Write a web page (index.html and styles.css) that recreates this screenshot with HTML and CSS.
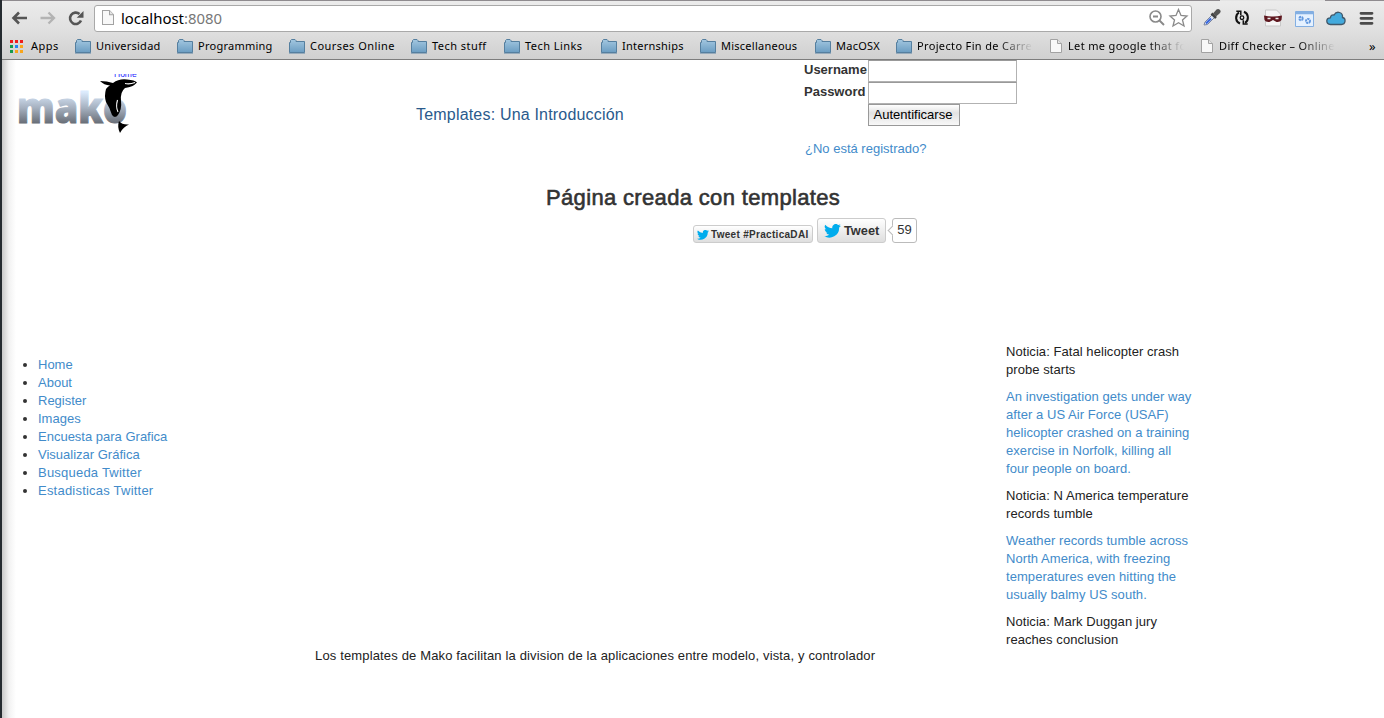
FILE: index.html
```html
<!DOCTYPE html>
<html lang="es">
<head>
<meta charset="utf-8">
<title>Templates</title>
<link rel="stylesheet" href="styles.css">
</head>
<body>
<svg class="defs" width="0" height="0" aria-hidden="true">
  <defs>
    <linearGradient id="gFolder" x1="0" y1="0" x2="0" y2="1"><stop offset="0" stop-color="#a3c7e0"/><stop offset="1" stop-color="#6b9dc2"/></linearGradient>
    <linearGradient id="gMako" gradientUnits="userSpaceOnUse" x1="0" y1="18" x2="0" y2="50"><stop offset="0" stop-color="#dcebfd"/><stop offset=".5" stop-color="#a5b0bf"/><stop offset="1" stop-color="#666b74"/></linearGradient>
    <symbol id="folder" viewBox="0 0 16 15"><path d="M.5 13.500V3.500H1.500V1.500L2.500.5H6L7 1.500V2.500H15.500V13.500Z" fill="url(#gFolder)" stroke="#557f9f"/><path d="M0 14.300H16" stroke="#557f9f" stroke-width=".6"/></symbol>
    <symbol id="file" viewBox="0 0 12 14"><path d="M.5.5H7.500L11.500 4.500V13.500H.5Z" fill="#f8f8f8" stroke="#a2a2a2"/><path d="M7.500.5V4.500H11.500" fill="#e4e4e4" stroke="#a2a2a2"/></symbol>
    <symbol id="bird" viewBox="0 0 24 20"><path d="M24 2.400a10 10 0 0 1-2.800.8A5 5 0 0 0 23.300.4a10 10 0 0 1-3.100 1.200A4.900 4.900 0 0 0 11.800 6.100 14 14 0 0 1 1.700 1a4.900 4.900 0 0 0 1.500 6.600A5 5 0 0 1 1 7a4.900 4.900 0 0 0 3.900 4.800 5 5 0 0 1-2.200.1 4.900 4.900 0 0 0 4.600 3.400A9.900 9.900 0 0 1 0 17.300 14 14 0 0 0 21.500 4.900 10 10 0 0 0 24 2.400Z" fill="#00aced"/></symbol>
  </defs>
</svg>

<div class="chrome">
  <div class="toolbar">
    <svg class="nav-icons" width="78" height="18" viewBox="0 0 78 18" fill="none">
      <path d="M9 3.500 3.500 9 9 14.500M4 9H17" stroke="#555" stroke-width="2.600"/>
      <path d="M38.500 3.500 44 9 38.500 14.500M43.500 9H30.500" stroke="#b3b3b3" stroke-width="2.300"/>
      <path d="M71 11.500A5.700 5.700 0 1 1 69.500 5" stroke="#555" stroke-width="2.600"/><path d="M73.500 2V8.800H66.700Z" fill="#555"/>
    </svg>
    <div class="omnibox">
      <svg class="page-icon" width="12" height="15" viewBox="0 0 12 14" preserveAspectRatio="none"><use href="#file"/></svg>
      <span class="host">localhost</span><span class="port">:8080</span>
      <svg class="omni-icons" width="42" height="20" viewBox="0 0 42 20" fill="none" stroke="#8a8a8a">
        <circle cx="7.500" cy="8.500" r="5.500" stroke-width="1.600"/><path d="M5 8.500H10M11.500 12.500 16 17" stroke-width="1.900"/>
        <path d="M30.500 1.500 33 7.500 39 8 34.500 12 36 18 30.500 14.800 25 18 26.500 12 22 8 28 7.500Z" stroke-width="1.300" fill="#fff"/>
      </svg>
    </div>
    <svg class="ext-icons" width="176" height="22" viewBox="0 0 176 22">
      <g><path d="M2 18 3 15 11 7 13.500 9.500 5.500 17.500Z" fill="#dce5f5" stroke="#7b86a0"/><path d="M4 16.500 9 11.500" stroke="#3967dc" stroke-width="2.200"/><path d="M9.500 6.500 14 11" stroke="#444" stroke-width="2.500"/><path d="M11 6.500 14.500 2.500Q16.500 1.500 18 3T17.500 6.500L14 9.500Z" fill="#555"/></g>
      <g fill="none" stroke="#111" stroke-width="2"><path d="M38 16.500A6.200 6.200 0 0 1 37 5.500M42 4.800A6.200 6.200 0 0 1 43 15.800"/><circle cx="40" cy="10.700" r="1.800" stroke-width="1.300"/><path d="M34.300 4.300H38.800V8.200M45.700 17H41.300V13.200" stroke-width="1.500"/></g>
      <path d="M63.500 3H74.500L78.500 7V19H63.500Z" fill="#f5f5f5" stroke="#c8c8c8"/><path d="M62 8.500Q71 10.500 80 8.500L79.500 13Q78 15.500 74.500 15L71 13 67.500 15Q63.500 15.500 62.500 13Z" fill="#5f1820"/><path d="M65.500 11.500H68.500M73.500 11.500H76.500" stroke="#eee" stroke-width="1.500"/>
      <path d="M93.500 4.500H111.500V19.500H93.500Z" fill="#e5f1ff" stroke="#83afe2"/><path d="M94 6H111" stroke="#83afe2" stroke-width="2.500"/><g fill="none" stroke="#6298df" stroke-width="2" stroke-dasharray="2 .6"><circle cx="99" cy="11.500" r="1.700"/><circle cx="106" cy="14" r="2"/></g>
      <path d="M128.500 17.500Q124.500 17 124.800 13.500 125.200 10.800 128.300 10.800 129 7.500 132 8 134 4.500 137.500 5.500 141 6.500 140.500 10.500 143.500 11.200 143 14.500 142.500 17.500 139.500 17.500Z" fill="#43aadd" stroke="#41586a" stroke-width="1.300"/>
      <path d="M159 6.300H170M159 11.300H170M159 16.300H170" stroke="#4a4a4a" stroke-width="2.800" stroke-linecap="round"/>
    </svg>
  </div>
  <div class="bookmarks">
    <div class="bm"><svg class="apps" width="13" height="13" viewBox="0 0 13 13"><path d="M0 0h3v3H0zM5 0h3v3H5zM10 0h3v3h-3z" fill="#ee1c1c"/><path d="M0 5h3v3H0zM0 10h3v3H0z" fill="#159a4b"/><path d="M5 5h3v3H5z" fill="#2383f3"/><path d="M10 5h3v3h-3zM5 10h3v3H5zM10 10h3v3h-3z" fill="#f8a51b"/></svg><span>Apps</span></div>
    <div class="bm tight"><svg class="folder"><use href="#folder"/></svg><span>Universidad</span></div>
    <div class="bm tight"><svg class="folder"><use href="#folder"/></svg><span>Programming</span></div>
    <div class="bm"><svg class="folder"><use href="#folder"/></svg><span>Courses Online</span></div>
    <div class="bm"><svg class="folder"><use href="#folder"/></svg><span>Tech stuff</span></div>
    <div class="bm"><svg class="folder"><use href="#folder"/></svg><span>Tech Links</span></div>
    <div class="bm tight"><svg class="folder"><use href="#folder"/></svg><span>Internships</span></div>
    <div class="bm tight"><svg class="folder"><use href="#folder"/></svg><span>Miscellaneous</span></div>
    <div class="bm tight"><svg class="folder"><use href="#folder"/></svg><span>MacOSX</span></div>
    <div class="bm"><svg class="folder"><use href="#folder"/></svg><span class="fade">Projecto Fin de Carre</span></div>
    <div class="bm"><svg class="file"><use href="#file"/></svg><span class="fade">Let me google that fo</span></div>
    <div class="bm"><svg class="file"><use href="#file"/></svg><span class="fade">Diff Checker – Online</span></div>
    <div class="bm more">»</div>
  </div>
</div>

<div class="page">
  <header class="head">
    <div class="logo">
      <svg width="122" height="64" viewBox="0 0 122 64">
        <text class="logo-home" x="96" y="3">Home</text>
        <text class="logo-text" x="-1" y="49" textLength="110" lengthAdjust="spacingAndGlyphs" fill="url(#gMako)" stroke="url(#gMako)">mako</text>
        <path d="M82 7Q89 7 95 9Q101 4.500 109 5.500Q117 6 119 8.500Q115 13 107 14Q102 18 103 27Q104 35 100 41Q97 45 94 41Q92 34 88 28Q86 22 88 15Q90 12 92 11.500Q86 11 82 7Z" fill="#000"/>
        <path d="M107 9.500Q112 10.500 117 8.500M99.500 26Q97.500 33 100 38" stroke="#fff" fill="none" stroke-width="1.100"/>
        <path d="M101 47Q104 51 111 50.500Q105 53 102 59Q99 53 101 47Z" fill="#000"/>
      </svg>
    </div>
    <div class="title">Templates: Una Introducción</div>
    <div class="login">
      <div class="field"><label>Username</label><input type="text"></div>
      <div class="field"><label>Password</label><input type="password"></div>
      <button class="submit">Autentificarse</button>
      <a class="signup">¿No está registrado?</a>
    </div>
  </header>
  <h3 class="heading">Página creada con templates</h3>
  <div class="tweets">
    <div class="tw small"><svg width="12" height="10"><use href="#bird"/></svg><span>Tweet #PracticaDAI</span></div>
    <div class="tw big"><svg width="17" height="14"><use href="#bird"/></svg><span>Tweet</span></div>
    <div class="count">59</div>
  </div>
  <main class="main">
    <ul class="menu">
      <li><a>Home</a></li><li><a>About</a></li><li><a>Register</a></li><li><a>Images</a></li><li><a>Encuesta para Grafica</a></li><li><a>Visualizar Gráfica</a></li><li class="wide"><a>Busqueda Twitter</a></li><li class="wide"><a>Estadisticas Twitter</a></li>
    </ul>
    <p class="center">Los templates de Mako facilitan la division de la aplicaciones entre modelo, vista, y controlador</p>
    <div class="news">
      <p>Noticia: Fatal helicopter crash<br>probe starts</p>
      <p><a>An investigation gets under way<br>after a US Air Force (USAF)<br>helicopter crashed on a training<br>exercise in Norfolk, killing all<br>four people on board.</a></p>
      <p>Noticia: N America temperature<br>records tumble</p>
      <p><a>Weather records tumble across<br>North America, with freezing<br>temperatures even hitting the<br>usually balmy US south.</a></p>
      <p>Noticia: Mark Duggan jury<br>reaches conclusion</p>
    </div>
  </main>
</div>
</body>
</html>
```
FILE: styles.css
```css
* { box-sizing: border-box; }
body {
  margin: 0;
  height: 718px;
  overflow: hidden;
  background: #fff;
  border-left: 2px solid #252b30;
  font: 13px/18px "Liberation Sans", Arial, sans-serif;
  color: #333;
}
.defs { display: block; height: 0; }
svg { display: block; flex: none; }

.chrome {
  height: 60px;
  padding-top: 1px;
  border-bottom: 1px solid #7d7d7d;
  background:
    linear-gradient(90deg, #8f8b8f 1218px, #e4e4e4 1218px 1323px, #8f8b8f 1323px) no-repeat 0 0 / 100% 1px,
    linear-gradient(#ececec, #e0e0e0 50%, #d0d0d0);
  font-family: "Noto Sans", sans-serif;
  color: #000;
}
.toolbar { display: flex; height: 33px; padding: 4px 0 0 8px; }
.nav-icons { margin-top: 4px; }
.omnibox {
  display: flex;
  width: 1098px;
  height: 27px;
  margin-left: 6px;
  padding: 0 1px 2px 7px;
  align-items: center;
  background: #fff;
  border: 1px solid #a9a9a9;
  border-radius: 3px;
  font-size: 14.900px;
}
.host { margin-left: 7px; }
.port { color: #777; }
.omni-icons { margin-left: auto; }
.ext-icons { margin: 2px 0 0 10px; }

.bookmarks {
  display: grid;
  grid-template-columns: 65px 102px 112px 122px 93px 97px 99px 115px 81px 154px 151px 168px 1fr;
  height: 24px;
  padding-left: 8px;
  align-items: center;
  font-size: 11px;
  letter-spacing: .45px;
}
.bm { display: flex; align-items: center; white-space: nowrap; }
.tight { letter-spacing: .25px; }
.bm .apps { margin-right: 8px; }
.bm .folder { width: 16px; height: 15px; margin-right: 5px; }
.bm .file { width: 12px; height: 14px; margin-right: 6px; }
.fade {
  letter-spacing: .35px;
  -webkit-mask-image: linear-gradient(90deg, #000 80px, transparent 116px);
  mask-image: linear-gradient(90deg, #000 80px, transparent 116px);
}
.more { font-size: 13px; }

.page {
  height: 658px;
  background: linear-gradient(90deg, #c9c9c9, #f2f2f2 7px, #fff 14px) no-repeat 0 0 / 14px 100%;
}
a { color: #428bca; }
.head { display: grid; grid-template-columns: 414px 388px 1fr; height: 120px; }
.logo { padding: 14px 0 0 16px; }
.logo-home { font: 8.500px "Liberation Sans", sans-serif; fill: #22f; }
.logo-text { font: 800 42px "Open Sans", "Noto Sans", sans-serif; stroke-width: 1px; }
.title { padding-top: 46px; font-size: 16px; letter-spacing: .19px; color: #2a5a8c; }
.field { display: flex; height: 22px; }
.field label { width: 64px; padding-top: 1px; font-weight: bold; }
.field input { width: 149px; height: 22px; margin: 0; padding: 0; border: 1px solid #b2b2b2; border-top-color: #999; background: #fff; }
.submit {
  display: block;
  width: 92px;
  height: 22px;
  margin: 0 0 0 64px;
  padding: 0 2px 0 0;
  border: 1px solid #999;
  border-radius: 0;
  background: linear-gradient(#fff, #e2e2e2 40%, #f8f8f8);
  font: 13px/18px "Liberation Sans", Arial, sans-serif;
  color: #000;
}
.signup { display: block; margin: 14px 0 0 1px; }
.heading { margin: 0; padding: 5px 0 0 544px; height: 38px; font: 500 22px/26px "Liberation Sans", Arial, sans-serif; letter-spacing: .34px; -webkit-text-stroke: .6px #333; }
.tweets { display: flex; height: 122px; padding-left: 691px; align-items: flex-start; }
.tw { display: flex; align-items: center; border: 1px solid #ccc; border-radius: 3px; background: linear-gradient(#fff, #dedede); font-weight: bold; white-space: nowrap; }
.small { width: 120px; height: 18px; margin-top: 7px; padding: 1px 0 0 3px; gap: 2px; font-size: 10px; letter-spacing: .3px; }
.big { width: 69px; height: 25px; margin-left: 4px; padding-left: 6px; gap: 3px; font-size: 12.800px; }
.count { position: relative; width: 25px; height: 25px; margin-left: 6px; border: 1px solid #bbb; border-radius: 3px; background: #fff; text-align: center; line-height: 22px; }
.count::before { content: ""; position: absolute; left: -4px; top: 8px; width: 6px; height: 6px; background: #fff; border: solid #bbb; border-width: 0 0 1px 1px; transform: rotate(45deg); }
.main { display: grid; grid-template-columns: 313px 691px 1fr; }
.menu { margin: 16px 0 0; padding-left: 36px; }
.wide { letter-spacing: .22px; }
.center { margin: 307px 0 0; letter-spacing: .15px; }
.news { padding-top: 3px; letter-spacing: .06px; }
.news p { margin: 0 0 9px; }
.main p { color: #222; }
```
